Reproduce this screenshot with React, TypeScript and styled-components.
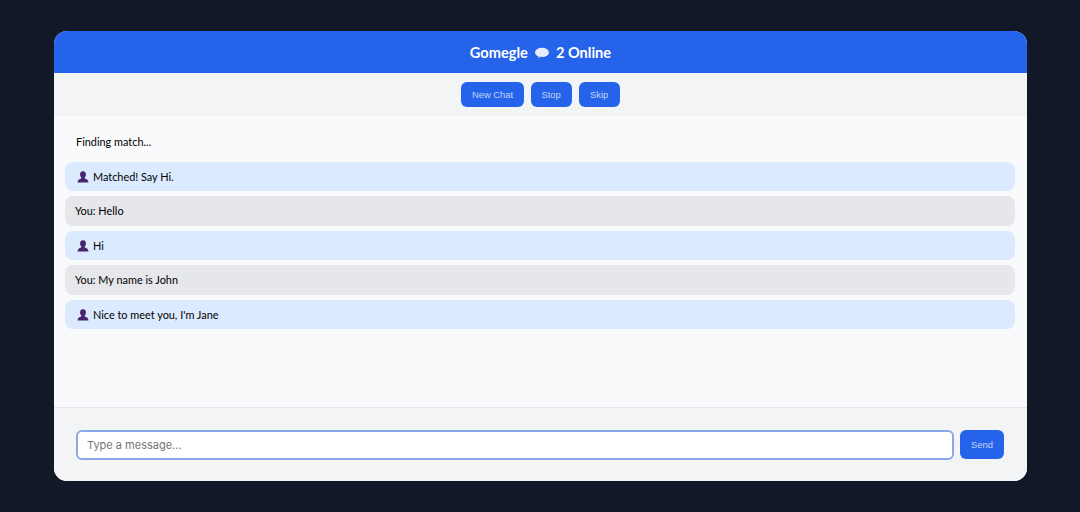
import styled, { createGlobalStyle } from 'styled-components';

const GlobalStyle = createGlobalStyle`
    html, body {
        margin: 0;
        padding: 0;
        height: 100%;
        background-color: #111827;
    }
    * {
        box-sizing: border-box;
    }
`;
const Page = styled.div`
    width: 1080px;
    height: 512px;
    padding: 31px 53px 31px 54px;
`;
const Card = styled.div`
    display: flex;
    flex-direction: column;
    height: 450px;
    border-radius: 13px;
    overflow: hidden;
    background-color: #f9fafb;
`;
const Header = styled.div`
    display: flex;
    align-items: center;
    justify-content: center;
    gap: 6px;
    height: 42px;
    padding-top: 1px;
    background-color: #2563eb;
    color: white;
    font-family: Lato, sans-serif;
    font-weight: 700;
    font-size: 14.6px;
`;
const Toolbar = styled.div`
    display: flex;
    justify-content: center;
    align-items: center;
    gap: 7px;
    height: 43px;
    background-color: #f3f4f6;
`;
const Button = styled.button`
    min-width: 41px;
    height: 25px;
    padding: 0 10.5px;
    border: 0;
    border-radius: 6px;
    background-color: #2563eb;
    color: #c4d4f9;
    font-family: "Liberation Sans", sans-serif;
    font-size: 9.4px;
`;
const Messages = styled.div`
    flex: 1;
    display: flex;
    flex-direction: column;
    gap: 5px;
    padding: 11px 12px 0 11px;
`;
const Message = styled.div<{ $from?: 'them' | 'you' }>`
    display: flex;
    align-items: center;
    gap: 4px;
    height: 29.5px;
    padding: 0 10px 0 ${(p) => (p.$from === 'them' ? '12px' : p.$from === 'you' ? '10px' : '11px')};
    border-radius: 8px;
    background-color: ${(p) =>
        p.$from === 'them' ? '#dbeafe' : p.$from === 'you' ? '#e5e7eb' : 'transparent'};
    color: #000;
    font-family: Lato, sans-serif;
    font-size: 10.9px;
    svg {
        margin-top: 1px;
    }
`;
const Footer = styled.div`
    display: flex;
    align-items: center;
    gap: 6px;
    height: 74px;
    padding: 0 23px 0 22px;
    background-color: #f3f4f6;
    border-top: 1px solid #e5e7eb;
`;
const Input = styled.input`
    flex: 1;
    height: 30px;
    padding: 0 9px;
    border: 2px solid #8aa8e6;
    border-radius: 6px;
    background-color: white;
    font-family: Inter, sans-serif;
    font-size: 11px;
    outline: none;
    &::placeholder {
        color: #757575;
    }
`;
const SendButton = styled(Button)`
    width: 44px;
    height: 29px;
    padding: 0;
`;

function BubbleIcon() {
    return (
        <svg width="16" height="12" viewBox="0 0 16 12" aria-hidden="true">
            <ellipse cx="8" cy="5.4" rx="7" ry="4.6" fill="#e9ebf8" />
            <path d="M4.5 8.5 L3.6 11.2 L7.6 9.6 Z" fill="#cfc8e8" />
        </svg>
    );
}

function PersonIcon() {
    return (
        <svg width="12" height="12" viewBox="0 0 12 12" aria-hidden="true">
            <ellipse cx="6" cy="3.4" rx="2.9" ry="3.2" fill="#46256f" />
            <path d="M4.4 6 L7.6 6 L7.8 7.4 C9.8 7.9 11.2 8.7 11.5 11.5 L0.5 11.5 C0.8 8.7 2.2 7.9 4.2 7.4 Z" fill="#46256f" />
        </svg>
    );
}

const messages: { from?: 'them' | 'you'; text: string }[] = [
    { text: 'Finding match...' },
    { from: 'them', text: 'Matched! Say Hi.' },
    { from: 'you', text: 'You: Hello' },
    { from: 'them', text: 'Hi' },
    { from: 'you', text: 'You: My name is John' },
    { from: 'them', text: "Nice to meet you, I'm Jane" },
];

export default function App() {
    return (
        <Page>
            <GlobalStyle />
            <Card>
                <Header>
                    <span>Gomegle</span>
                    <BubbleIcon />
                    <span>2 Online</span>
                </Header>
                <Toolbar>
                    <Button>New Chat</Button>
                    <Button>Stop</Button>
                    <Button>Skip</Button>
                </Toolbar>
                <Messages>
                    {messages.map((m) => (
                        <Message key={m.text} $from={m.from}>
                            {m.from === 'them' ? <PersonIcon /> : null}
                            <span>{m.text}</span>
                        </Message>
                    ))}
                </Messages>
                <Footer>
                    <Input placeholder="Type a message..." />
                    <SendButton>Send</SendButton>
                </Footer>
            </Card>
        </Page>
    );
}
